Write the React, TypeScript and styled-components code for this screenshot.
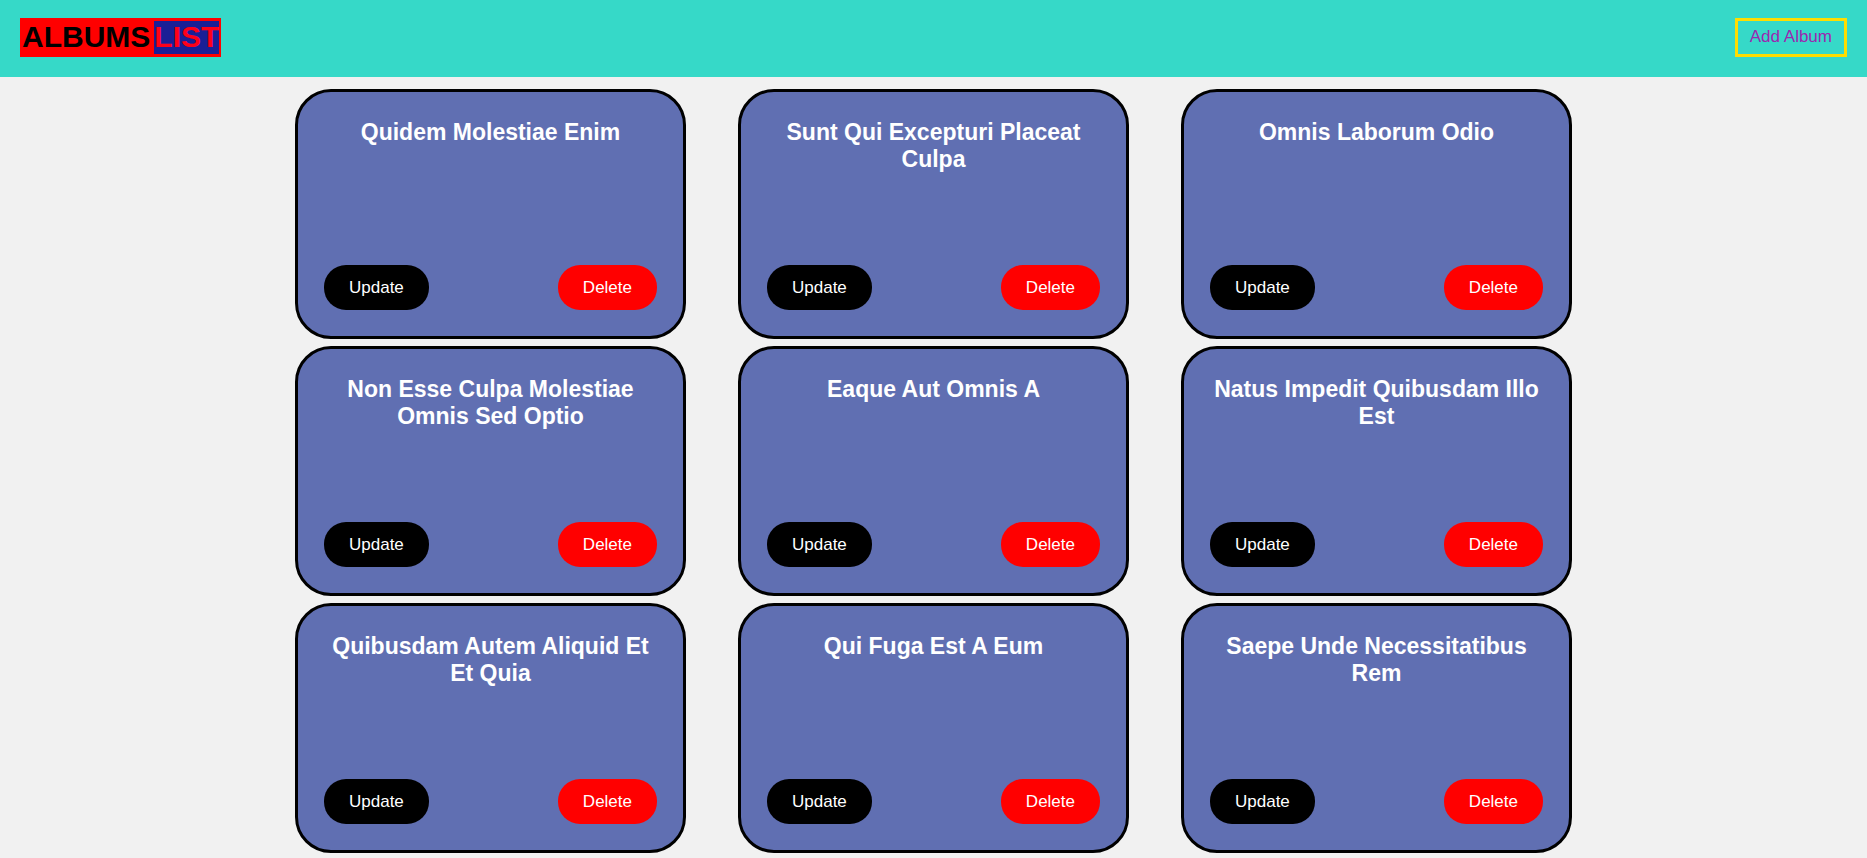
import React from 'react';
import styled, { createGlobalStyle } from 'styled-components';

const GlobalStyle = createGlobalStyle`
  * {
    box-sizing: border-box;
  }
  body {
    margin: 0;
    background: #f1f1f1;
    font-family: "Liberation Sans", Arial, Helvetica, sans-serif;
  }
`;

const Header = styled.header`
  display: flex;
  align-items: center;
  justify-content: space-between;
  padding: 18px 20px 20px;
  background: #36d9c8;
`;

const Logo = styled.h1`
  display: flex;
  gap: 4px;
  margin: 0;
  padding: 3px 2px;
  background: #ff0000;
  color: #000000;
  font-size: 30px;
  line-height: 31px;
`;

const LogoAccent = styled.span`
  padding-bottom: 2px;
  background: #1a1f96;
  color: #ff0019;
`;

const AddLink = styled.a`
  height: 39px;
  padding: 6px 12px;
  border: 3px solid #ffdd00;
  color: #9c27b0;
  font-size: 17px;
  line-height: 19px;
  text-decoration: none;
`;

const AlbumGrid = styled.main`
  display: grid;
  grid-template-columns: repeat(3, minmax(0, 1fr));
  gap: 7px 52px;
  max-width: 1277px;
  margin: 12px auto 0;
`;

const Card = styled.article`
  display: flex;
  flex-direction: column;
  justify-content: space-between;
  min-height: 250px;
  padding: 27px 26px 26px;
  border: 3px solid #000000;
  border-radius: 36px;
  background: #606fb2;
`;

const CardTitle = styled.h2`
  margin: 0;
  color: #ffffff;
  font-size: 23px;
  line-height: 27px;
  text-align: center;
`;

const CardActions = styled.div`
  display: flex;
  justify-content: space-between;
`;

const ActionButton = styled.button<{ $danger?: boolean }>`
  height: 45px;
  padding: 0 25px;
  border: 0;
  border-radius: 22px;
  background: ${({ $danger }) => ($danger ? '#ff0000' : '#000000')};
  color: #ffffff;
  font-family: inherit;
  font-size: 17px;
  cursor: pointer;
`;

const albums = [
  'Quidem Molestiae Enim',
  'Sunt Qui Excepturi Placeat Culpa',
  'Omnis Laborum Odio',
  'Non Esse Culpa Molestiae Omnis Sed Optio',
  'Eaque Aut Omnis A',
  'Natus Impedit Quibusdam Illo Est',
  'Quibusdam Autem Aliquid Et Et Quia',
  'Qui Fuga Est A Eum',
  'Saepe Unde Necessitatibus Rem',
];

export default function App() {
  return (
    <>
      <GlobalStyle />
      <Header>
        <Logo>
          ALBUMS<LogoAccent>LIST</LogoAccent>
        </Logo>
        <AddLink href="#add-album">Add Album</AddLink>
      </Header>
      <AlbumGrid>
        {albums.map((title) => (
          <Card key={title}>
            <CardTitle>{title}</CardTitle>
            <CardActions>
              <ActionButton type="button">Update</ActionButton>
              <ActionButton type="button" $danger>
                Delete
              </ActionButton>
            </CardActions>
          </Card>
        ))}
      </AlbumGrid>
    </>
  );
}
